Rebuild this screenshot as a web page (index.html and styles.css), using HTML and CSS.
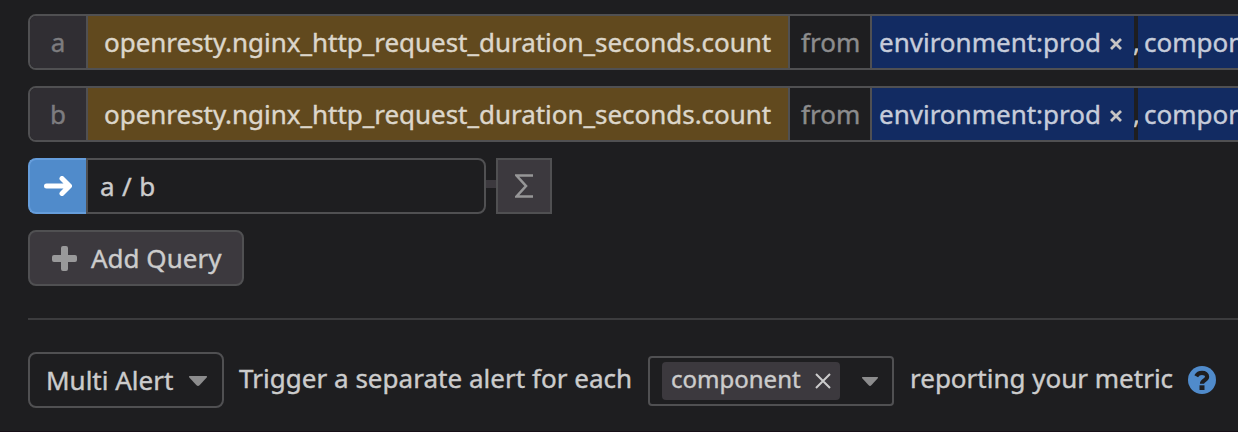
FILE: index.html
```html
<!DOCTYPE html>
<html lang="en">
<head>
<meta charset="utf-8">
<title>Monitor query</title>
<link rel="stylesheet" href="styles.css">
</head>
<body>
<main class="editor">
  <div class="query">
    <span class="letter">a</span>
    <span class="metric">openresty.nginx_http_request_duration_seconds.count</span>
    <span class="from">from</span>
    <span class="tag"><span>environment:prod</span><svg class="x" viewBox="0 0 12 12"><path d="M1 1l10 10m0-10l-10 10"/></svg></span>
    <span class="comma">,</span>
    <span class="tag tag-next">component:</span>
  </div>
  <div class="query">
    <span class="letter">b</span>
    <span class="metric">openresty.nginx_http_request_duration_seconds.count</span>
    <span class="from">from</span>
    <span class="tag"><span>environment:prod</span><svg class="x" viewBox="0 0 12 12"><path d="M1 1l10 10m0-10l-10 10"/></svg></span>
    <span class="comma">,</span>
    <span class="tag tag-next">component:</span>
  </div>
  <div class="formula">
    <span class="arrow"><svg width="28" height="20" viewBox="0 0 28 20"><path d="M2.500 10H25M18 2.500l7.500 7.500-7.500 7.500"/></svg></span>
    <span class="expression">a / b</span>
    <span class="link"></span>
    <span class="sigma"><svg width="18" height="24" viewBox="0 0 18 24"><path d="M18 1.500H1.500L11 12 1.500 22.500H18"/></svg></span>
  </div>
  <button class="add"><svg width="25" height="25" viewBox="0 0 25 25"><path d="M11 0h3a2 2 0 0 1 2 2v7h7a2 2 0 0 1 2 2v3a2 2 0 0 1-2 2h-7v7a2 2 0 0 1-2 2h-3a2 2 0 0 1-2-2v-7H2a2 2 0 0 1-2-2v-3a2 2 0 0 1 2-2h7V2a2 2 0 0 1 2-2z"/></svg><span>Add Query</span></button>
  <hr class="rule">
  <div class="alert">
    <span class="select"><span>Multi Alert</span><svg class="caret" width="18" height="10" viewBox="0 0 18 10"><path d="M1 0h16q2 0 .5 1.700l-7 7.500q-1.500 1.500-3 0l-7-7.500Q-1 0 1 0z"/></svg></span>
    <span class="copy lead">Trigger a separate alert for each</span>
    <span class="group"><span class="chip"><span>component</span><svg width="16" height="16" viewBox="0 0 16 16"><path d="M1 1l14 14m0-14L1 15"/></svg></span><svg class="caret" width="16" height="9" viewBox="0 0 18 10"><path d="M1 0h16q2 0 .5 1.700l-7 7.500q-1.500 1.500-3 0l-7-7.500Q-1 0 1 0z"/></svg></span>
    <span class="copy tail">reporting your metric</span>
    <svg class="help" width="28" height="28" viewBox="0 0 28 28"><circle cx="14" cy="14" r="14"/><path class="hook" d="M8.200 10.200C9.600 7.700 11.400 6.800 14 6.800c3.100 0 5.100 1.500 5.100 3.900 0 3.700-5.100 3.300-5.100 7"/><path class="dot" d="M11.500 19.300h5V24h-5z"/></svg>
  </div>
</main>
</body>
</html>
```
FILE: styles.css
```css
* { box-sizing: border-box; }
body { margin: 0; background: #1e1e20; color: #cccccc; font: 26px/36px "Noto Sans", sans-serif; -webkit-text-stroke: .4px; overflow: hidden; }
.editor { width: 1238px; height: 432px; padding: 14px 0 0 28px; border-bottom: 1px solid #170f17; overflow: hidden; }
.query { display: flex; width: 1300px; height: 56px; margin-bottom: 16px; border: 2px solid #505052; border-radius: 8px 0 0 8px; overflow: hidden; line-height: 52px; white-space: nowrap; }
.letter { flex: 0 0 56px; background: #302e33; color: #7d7c7f; text-align: center; }
.metric { flex: 0 0 704px; padding-left: 16px; background: #61491e; color: #dcd6ca; border: solid #505052; border-width: 0 2px; letter-spacing: -.03px; }
.from { flex: 0 0 80px; padding-left: 11px; color: #8c8c8d; }
.tag { display: flex; align-items: center; gap: 9px; flex: 0 0 264px; padding-left: 7px; background: #122b62; color: #c6ccda; border-left: 2px solid #505052; }
.x { width: 12px; height: 12px; margin-top: 3px; stroke: #c8c4c3; stroke-width: 2.8; }
.comma { flex: 0 0 4px; min-width: 0; overflow: hidden; text-indent: -1px; }
.tag-next { padding-left: 6px; border: 0; }
.formula { display: flex; align-items: center; height: 56px; margin-bottom: 16px; }
.arrow { display: flex; align-items: center; justify-content: center; width: 58px; height: 56px; background: #508bcb; border: 2px solid #659ddb; border-right: 0; border-radius: 8px 0 0 8px; }
svg { flex: none; fill: none; }
.arrow svg { margin-right: 1px; stroke: #fff; stroke-width: 5; stroke-linecap: round; stroke-linejoin: round; }
.expression { width: 400px; height: 56px; border: 2px solid #505052; border-radius: 0 8px 8px 0; padding-left: 12px; line-height: 53px; word-spacing: .7px; }
.link { width: 10px; height: 8px; margin-top: -4px; background: #3c393e; }
.sigma { display: flex; align-items: center; justify-content: center; width: 56px; height: 56px; border: 2px solid #505052; background: #3c393e; }
.sigma svg { margin-right: 1px; stroke: #969697; stroke-width: 2.6; }
.add { display: flex; align-items: center; width: 216px; height: 56px; padding: 0 0 0 22px; gap: 14px; border: 2px solid #505052; border-radius: 8px; background: #3c393e; color: inherit; font: inherit; white-space: nowrap; }
.add svg { fill: #99999a; }
.rule { height: 2px; margin: 32px 0; border: 0; background: #3c3c3e; }
.alert { display: flex; align-items: center; height: 56px; white-space: nowrap; }
.select { display: flex; align-items: center; justify-content: space-between; flex: 0 0 196px; height: 56px; padding: 0 15px 0 16px; border: 2px solid #505052; border-radius: 8px; }
.caret { fill: #8c8c8d; margin-top: 2px; }
.copy { margin-top: -4px; }
.lead { flex: 0 0 409px; margin-left: 15px; letter-spacing: .03px; }
.group { display: flex; align-items: center; gap: 22px; flex: 0 0 246px; height: 50px; margin-top: 2px; padding-left: 12px; border: 2px solid #505052; border-radius: 4px; }
.group .caret { margin-top: 0; }
.chip { display: flex; align-items: center; justify-content: space-between; flex: 0 0 178px; height: 38px; padding: 0 9px; background: #3c393e; border-radius: 4px; font-size: 24px; }
.chip > span { margin-top: -4px; }
.chip svg { stroke: #ccc; stroke-width: 2; }
.tail { flex: 0 0 294px; padding-left: 16px; }
.help { margin-top: 0; }
.help circle { fill: #508bcb; }
.help .hook { stroke: #1e1e20; stroke-width: 4.2; }
.help .dot { fill: #1e1e20; }
```
